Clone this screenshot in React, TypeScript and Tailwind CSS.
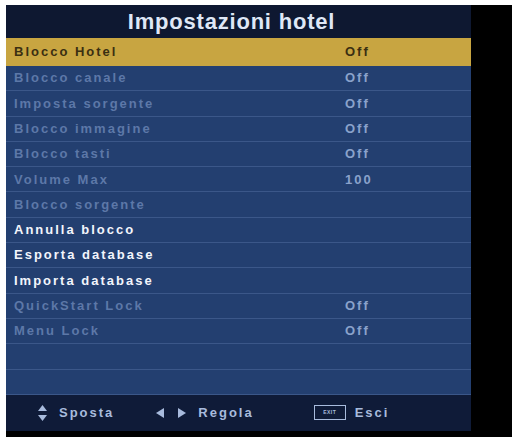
const rows: { label: string; value?: string; tone: 'active' | 'dim' | 'bright' | 'empty' }[] = [
  { label: 'Blocco Hotel', value: 'Off', tone: 'active' },
  { label: 'Blocco canale', value: 'Off', tone: 'dim' },
  { label: 'Imposta sorgente', value: 'Off', tone: 'dim' },
  { label: 'Blocco immagine', value: 'Off', tone: 'dim' },
  { label: 'Blocco tasti', value: 'Off', tone: 'dim' },
  { label: 'Volume Max', value: '100', tone: 'dim' },
  { label: 'Blocco sorgente', tone: 'dim' },
  { label: 'Annulla blocco', tone: 'bright' },
  { label: 'Esporta database', tone: 'bright' },
  { label: 'Importa database', tone: 'bright' },
  { label: 'QuickStart Lock', value: 'Off', tone: 'dim' },
  { label: 'Menu Lock', value: 'Off', tone: 'dim' },
  { label: '', tone: 'empty' },
  { label: '', tone: 'empty' },
];

function Row({ label, value, tone }: (typeof rows)[number]) {
  if (tone === 'active') {
    return (
      <div className="grid grid-cols-[331px_1fr] items-center h-[28px] bg-[#c8a541] pl-[8px] text-[#3b2f12]">
        <span>{label}</span>
        <span>{value}</span>
      </div>
    );
  }
  const labelColor = tone === 'bright' ? 'text-[#f2f5fc]' : 'text-[#5d78a8]';
  return (
    <div className="grid grid-cols-[331px_1fr] items-center h-[25.3px] border-b border-[#3b5789] pl-[8px]">
      <span className={labelColor}>{label}</span>
      <span className="text-[#8aa2cb]">{value}</span>
    </div>
  );
}

export default function App() {
  return (
    <div className="w-[515px] h-[442px] bg-white pt-[5px] pl-[6px] pr-[3px] pb-[5px]">
      <div className="h-full bg-black">
        <div
          className="w-[465px] flex flex-col bg-[#233f70]"
          style={{ fontFamily: '"Liberation Sans", Arial, sans-serif' }}
        >
          {/* Title */}
          <div className="h-[33px] bg-[#0e1831] flex items-center justify-center pr-[14px] text-[22px] font-bold text-[#dfe7f6] tracking-[0.8px]">
            Impostazioni hotel
          </div>

          {/* Menu rows */}
          <div className="text-[13px] font-bold tracking-[2px]">
            {rows.map((r, i) => (
              <Row key={i} {...r} />
            ))}
          </div>

          {/* Footer */}
          <div className="h-[36px] bg-[#0f1b38] flex items-center text-[13px] font-bold tracking-[2px] text-[#a8bbdd]">
            <div className="flex items-center ml-[32px] gap-[12px]">
              <svg width="9" height="16" viewBox="0 0 9 16">
                <polygon points="4.5,0 9,6 0,6" fill="#a8bbdd" />
                <polygon points="0,10 9,10 4.5,16" fill="#a8bbdd" />
              </svg>
              <span>Sposta</span>
            </div>
            <div className="flex items-center ml-[42px] gap-[12px]">
              <svg width="30" height="10" viewBox="0 0 30 10">
                <polygon points="0,5 8,0 8,10" fill="#a8bbdd" />
                <polygon points="22,0 30,5 22,10" fill="#a8bbdd" />
              </svg>
              <span>Regola</span>
            </div>
            <div className="flex items-center ml-[60px] gap-[9px]">
              <div className="w-[32px] h-[15px] border-[1.5px] border-[#a8bbdd] flex items-center justify-center text-[5px] tracking-[0.5px] leading-none">
                EXIT
              </div>
              <span>Esci</span>
            </div>
          </div>
        </div>
      </div>
    </div>
  );
}
